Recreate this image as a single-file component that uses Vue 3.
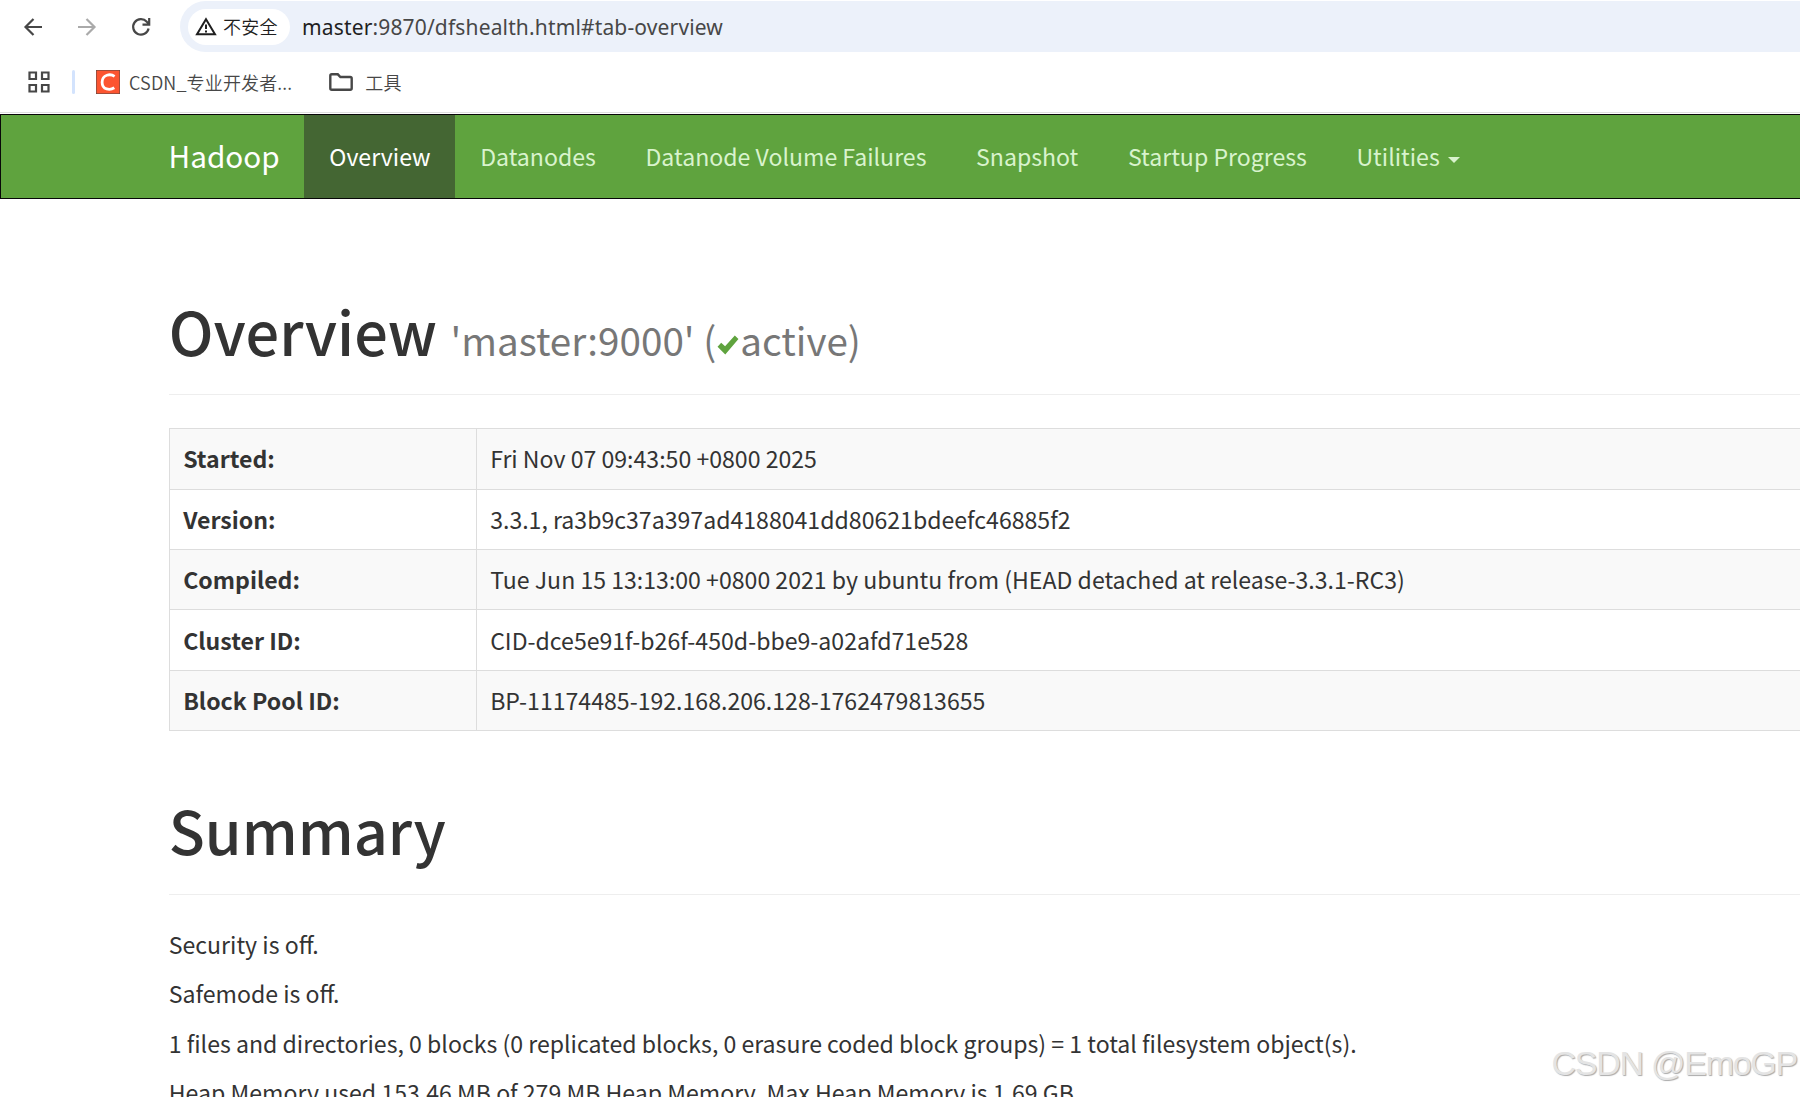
<template>
  <div class="window">
    <header class="chrome">
      <div class="toolbar">
        <svg class="tool back" viewBox="0 0 20 20"><path d="M19 10H3M10.5 2l-8 8 8 8" /></svg>
        <svg class="tool forward" viewBox="0 0 20 20"><path d="M1 10h16M9.500 2l8 8-8 8" /></svg>
        <svg class="tool reload" viewBox="0 0 20 20">
          <path d="M17.6 11.5A7.8 7.8 0 1 1 15.8 4.7L18 7M18.2 1v6.7h-6.7" />
        </svg>
        <div class="omnibox">
          <span class="chip">
            <svg class="warn" viewBox="0 0 22 19">
              <path d="M11 2.2L20 17.3H2z" />
              <path d="M11 7.5v4.6M11 13.4v2" />
            </svg>
            <span>不安全</span>
          </span>
          <span class="url"><b>master</b>:9870/dfshealth.html#tab-overview</span>
        </div>
      </div>
      <div class="bookmarks">
        <svg class="apps" viewBox="0 0 22 22">
          <path d="M1.5 1.5h6.5v6.5H1.5zM14 1.5h6.5v6.5H14zM1.5 14h6.5v6.5H1.5zM14 14h6.5v6.5H14z" />
        </svg>
        <i class="divider"></i>
        <svg class="csdn" viewBox="0 0 24 24">
          <rect width="24" height="24" fill="#fc5531" />
          <path d="M18.6 6.3C14.5 3.6 6.3 4.2 6.1 12.2c0 7.8 8 8.2 12.2 5.6" />
        </svg>
        <span class="mark">CSDN_专业开发者...</span>
        <svg class="folder" viewBox="0 0 24 18">
          <path d="M1.3 2.8q0-1.5 1.5-1.5h6l2.6 2.7h9.800q1.5 0 1.5 1.5v9.7q0 1.5-1.5 1.5H2.8q-1.5 0-1.5-1.5z" />
        </svg>
        <span class="mark">工具</span>
      </div>
    </header>

    <nav class="navbar">
      <a class="brand">Hadoop</a>
      <a v-for="tab in tabs" :key="tab" class="tab" :class="{ active: tab === 'Overview' }">{{ tab }}</a>
      <a class="tab">Utilities <i class="caret"></i></a>
    </nav>

    <main class="container">
      <div class="page-header">
        <h1>Overview <small>'master:9000' (<svg class="ok" viewBox="0 0 24 22"><path d="M0.5 13L4.500 8.5 8.8 12.5 19.5 0.5 23.5 4.5 9 21.5z" /></svg>active)</small></h1>
      </div>
      <table>
        <tbody>
          <tr v-for="row in rows" :key="row.name">
            <th>{{ row.name }}:</th>
            <td>{{ row.value }}</td>
          </tr>
        </tbody>
      </table>

      <div class="page-header">
        <h1>Summary</h1>
      </div>
      <p v-for="line in summary" :key="line">{{ line }}</p>
    </main>

    <div class="watermark">CSDN @EmoGP</div>
  </div>
</template>

<script setup>
const tabs = ['Overview', 'Datanodes', 'Datanode Volume Failures', 'Snapshot', 'Startup Progress']

const rows = [
  { name: 'Started', value: 'Fri Nov 07 09:43:50 +0800 2025' },
  { name: 'Version', value: '3.3.1, ra3b9c37a397ad4188041dd80621bdeefc46885f2' },
  { name: 'Compiled', value: 'Tue Jun 15 13:13:00 +0800 2021 by ubuntu from (HEAD detached at release-3.3.1-RC3)' },
  { name: 'Cluster ID', value: 'CID-dce5e91f-b26f-450d-bbe9-a02afd71e528' },
  { name: 'Block Pool ID', value: 'BP-11174485-192.168.206.128-1762479813655' }
]

const summary = [
  'Security is off.',
  'Safemode is off.',
  '1 files and directories, 0 blocks (0 replicated blocks, 0 erasure coded block groups) = 1 total filesystem object(s).',
  'Heap Memory used 153.46 MB of 279 MB Heap Memory. Max Heap Memory is 1.69 GB.'
]
</script>

<style>
body {
  margin: 0;
  overflow: hidden;
}
</style>

<style scoped>
.window {
  position: relative;
  width: 1800px;
  height: 1097px;
  overflow: hidden;
  background: #fff;
  color: #333;
  font: 23.1px/33px "Noto Sans CJK SC", sans-serif;
}

svg {
  flex: none;
  fill: none;
  stroke: #474747;
}

/* 浏览器工具栏 */
.chrome {
  height: 112px;
  border-bottom: 1px solid #dfdfdf;
  margin-bottom: 1px;
}

.toolbar {
  display: flex;
  align-items: center;
  height: 51px;
  padding-top: 1px;
}

.tool {
  width: 20px;
  height: 20px;
  stroke-width: 2.2;
}

.back {
  margin-left: 23px;
}

.forward {
  margin-left: 34px;
  stroke: #aaa;
}

.reload {
  margin-left: 34px;
}

.omnibox {
  display: flex;
  align-items: center;
  flex: 1;
  height: 51px;
  margin-left: 29px;
  padding-left: 8px;
  border-radius: 26px 0 0 26px;
  background: #ecf1fa;
}

.chip {
  display: flex;
  align-items: center;
  box-sizing: border-box;
  width: 102px;
  height: 36px;
  padding-left: 7px;
  border-radius: 18px;
  background: #fff;
  color: #1f1f1f;
  font-size: 18px;
  font-weight: 350;
  letter-spacing: 0.2px;
}

.warn {
  width: 22px;
  height: 19px;
  margin-right: 6px;
  stroke: #1f1f1f;
  stroke-width: 2;
}

.url {
  margin-left: 12px;
  color: #474747;
  font: 21px/30px "Noto Sans", "Open Sans", sans-serif;
  letter-spacing: 0.15px;
}

.url b {
  color: #1f1f1f;
  font-weight: 400;
}

.bookmarks {
  display: flex;
  align-items: center;
  height: 60px;
  color: #474747;
  font-size: 18px;
  font-weight: 350;
  letter-spacing: 0.15px;
}

.apps {
  width: 22px;
  height: 22px;
  margin-left: 28px;
  stroke-width: 2.2;
}

.divider {
  width: 3px;
  height: 24px;
  margin: 0 21px 0 22px;
  border-radius: 2px;
  background: #d3e3fd;
}

.csdn {
  width: 24px;
  height: 24px;
  margin-right: 9px;
}

.csdn path {
  stroke: #fff;
  stroke-width: 2.8;
}

.folder {
  width: 24px;
  height: 18px;
  margin: 0 12px 0 37px;
  stroke-width: 2.4;
}

/* 导航栏 */
.navbar {
  display: flex;
  box-sizing: border-box;
  width: 1900px;
  height: 84.5px;
  padding-left: 167.6px;
  border: 1px solid #080808;
  background: #5fa33e;
  line-height: 82.5px;
}

.brand {
  padding-right: 24.75px;
  color: #fff;
  font-size: 29.7px;
}

.tab {
  padding: 0 24.8px;
  color: #d9f3cd;
}

.tab.active {
  background: #446633;
  color: #fff;
}

.caret {
  display: inline-block;
  margin-left: 3px;
  border: 6px solid transparent;
  border-top-color: currentColor;
  border-bottom: 0;
  vertical-align: middle;
}

/* 页面内容 */
.container {
  width: 1880px;
  margin-left: 168.75px;
  padding-top: 33px;
}

.page-header {
  margin: 66px 0 33px;
  padding-bottom: 14.85px;
  border-bottom: 1px solid #eee;
}

h1 {
  margin: 0 0 16.5px;
  font-size: 59.4px;
  font-weight: 500;
  line-height: 65.34px;
}

small {
  color: #777;
  font-size: 65%;
  font-weight: 400;
  line-height: 1;
}

.ok {
  width: 24px;
  height: 20px;
  vertical-align: 1px;
  fill: #5fa33e;
  stroke: none;
}

table {
  width: 100%;
  border-collapse: collapse;
}

th,
td {
  box-sizing: border-box;
  height: 60.4px;
  padding: 13px 13.4px;
  border: 1px solid #ddd;
  text-align: left;
}

th {
  width: 307px;
}

tr:nth-child(odd) {
  background: #f9f9f9;
}

p {
  margin: 0 0 16.5px;
}

.watermark {
  position: absolute;
  right: 3px;
  bottom: 16px;
  color: #e4e4e4;
  font: 300 34px/36px "Liberation Sans", sans-serif;
  letter-spacing: -1.25px;
  text-shadow: 1px 1px 1px #aaa;
}
</style>
